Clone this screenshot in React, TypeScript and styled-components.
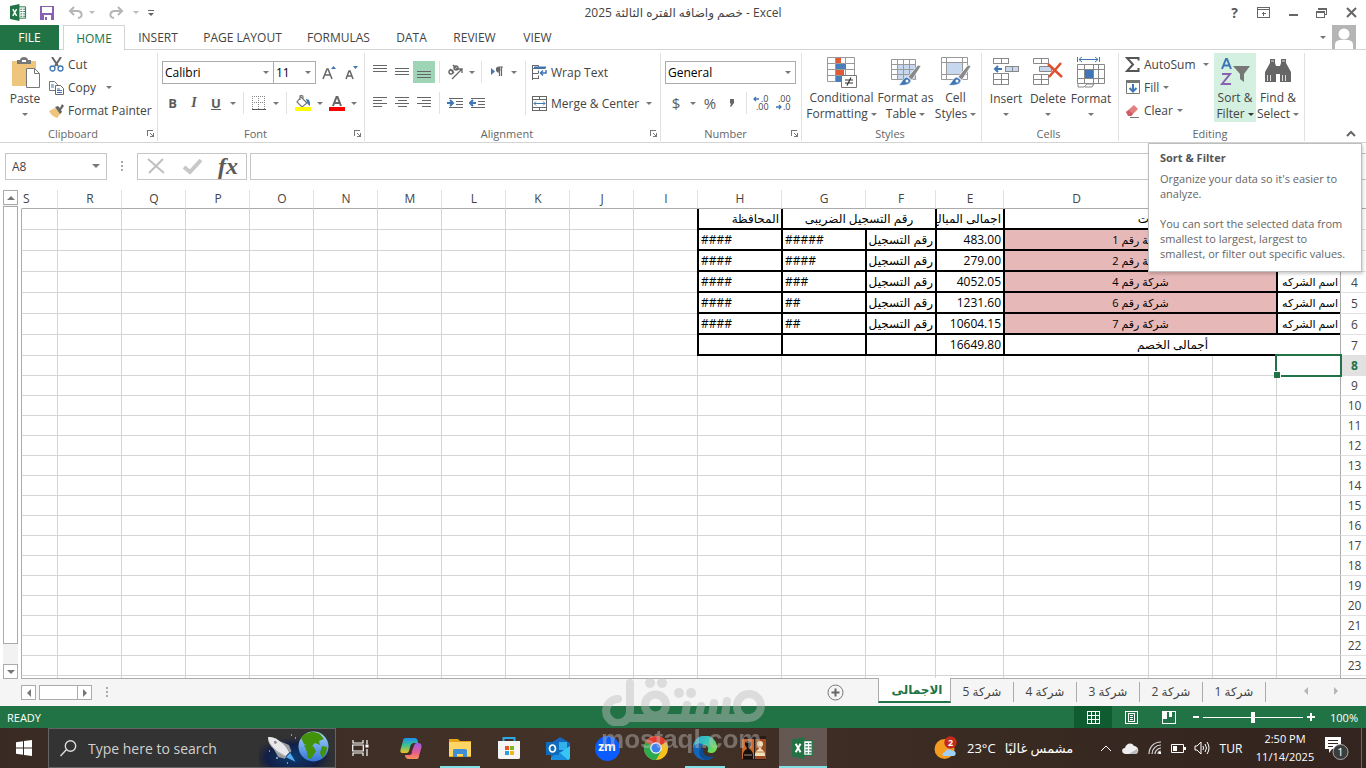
import React from "react";
import styled, { createGlobalStyle, css } from "styled-components";

const GREEN = "#217346";
const LINE = "#d4d4d4";
const EDGE = "#ababab";
const INK = "#444";
const BLUE = "#3f76b5";
const GREY = "#777";

const Global = createGlobalStyle`
  * { box-sizing: border-box; }
  html, body { margin: 0; padding: 0; }
  body { font-family: "Open Sans", "Noto Sans", "DejaVu Sans", sans-serif; font-size: 12px; color: ${INK}; background: #fff; overflow: hidden; }
  button, input, select { font: inherit; color: inherit; margin: 0; padding: 0; border: 0; background: none; border-radius: 0; outline: 0; }
  button { white-space: nowrap; }
  svg { display: block; flex: none; }
`;

const Shell = styled.div`
  display: flex;
  flex-direction: column;
  height: 100vh;
`;

/* ---------- title bar ---------- */
const TitleBar = styled.header`
  display: grid;
  grid-template-columns: 1fr auto 1fr;
  align-items: center;
  flex: none;
  height: 25px;
`;
const QuickAccess = styled.div`
  display: flex;
  align-items: center;
  padding-left: 9px;
  height: 23px;
`;
const IconButton = styled.button<{ $w: number; $h?: number; $on?: boolean }>`
  display: flex;
  align-items: center;
  justify-content: center;
  flex: none;
  width: ${(p) => p.$w}px;
  height: ${(p) => p.$h ?? 22}px;
  background: ${(p) => (p.$on ? "#9fd5b7" : "none")};
`;
const Title = styled.h1`
  margin: 0;
  font-size: 12px;
  font-weight: 400;
  line-height: 25px;
`;
const WindowButtons = styled.div`
  display: flex;
  justify-content: flex-end;
`;

/* ---------- tab strip ---------- */
const TabStrip = styled.nav`
  display: flex;
  flex: none;
  height: 25px;
  border-bottom: 1px solid ${LINE};
`;
const FileTab = styled.button`
  width: 59px;
  height: 25px;
  margin-right: 4px;
  background: ${GREEN};
  color: #fff;
`;
const RibbonTab = styled.button<{ $w: number; $on?: boolean }>`
  width: ${(p) => p.$w}px;
  height: 25px;
  ${(p) =>
    p.$on &&
    css`
      color: ${GREEN};
      background: #fff;
      border: 1px solid ${LINE};
      border-bottom: 0;
    `}
`;
const Account = styled.div`
  display: flex;
  align-items: center;
  gap: 6px;
  margin-left: auto;
  padding-right: 10px;
`;

/* ---------- ribbon ---------- */
const Ribbon = styled.section`
  position: relative;
  display: flex;
  flex: none;
  height: 93px;
  padding-top: 3px;
  border-bottom: 1px solid ${LINE};
`;
const Group = styled.div<{ $w: number }>`
  display: flex;
  flex-direction: column;
  flex: none;
  width: ${(p) => p.$w}px;
  height: 88px;
  border-right: 1px solid #e1e1e1;
`;
const GroupBody = styled.div<{ $pad?: number; $gap?: number }>`
  display: flex;
  flex: 1;
  gap: ${(p) => p.$gap ?? 0}px;
  padding-left: ${(p) => p.$pad ?? 4}px;
`;
const GroupName = styled.div`
  display: flex;
  align-items: center;
  height: 16px;
  padding-right: 3px;
  font-size: 11px;
  color: #666;
  text-align: center;
  span { flex: 1; }
`;
const Stack = styled.div<{ $top?: number; $gap?: number }>`
  display: flex;
  flex-direction: column;
  gap: ${(p) => p.$gap ?? 0}px;
  padding-top: ${(p) => p.$top ?? 0}px;
`;
const Row = styled.div`
  display: flex;
  align-items: center;
  height: 22px;
`;
const Rule = styled.i<{ $h?: number; $m?: number }>`
  flex: none;
  width: 1px;
  height: ${(p) => p.$h ?? 22}px;
  margin: 0 ${(p) => p.$m ?? 4}px;
  background: #e1e1e1;
`;
const LineButton = styled.button<{ $w?: number }>`
  display: flex;
  align-items: center;
  gap: 4px;
  height: 23px;
  width: ${(p) => (p.$w ? p.$w + "px" : "auto")};
`;
const Push = styled.span`
  margin-left: auto;
`;
const BigButton = styled.button<{ $w: number; $on?: boolean }>`
  display: flex;
  flex-direction: column;
  align-items: center;
  flex: none;
  width: ${(p) => p.$w}px;
  height: 69px;
  padding-top: 4px;
  line-height: 16px;
  background: ${(p) => (p.$on ? "#d3f0e0" : "none")};
`;
const BigIcon = styled.span`
  display: flex;
  height: 35px;
`;
const CaretLine = styled.span`
  display: flex;
  align-items: center;
  gap: 3px;
  height: 16px;
`;
const SelectBox = styled.span<{ $w: number }>`
  display: flex;
  align-items: center;
  justify-content: space-between;
  width: ${(p) => p.$w}px;
  height: 23px;
  padding-right: 4px;
  border: 1px solid ${EDGE};
  color: #000;
  & + & { border-left: 0; }
  select { appearance: none; flex: 1; min-width: 0; height: 21px; padding-left: 2px; }
`;
const Glyph = styled.span<{ $size?: number; $style?: "italic" | "underline"; $weight?: number; $serif?: boolean }>`
  font-size: ${(p) => p.$size ?? 13}px;
  font-weight: ${(p) => p.$weight ?? 700};
  font-style: ${(p) => (p.$style === "italic" ? "italic" : "normal")};
  text-decoration: ${(p) => (p.$style === "underline" ? "underline" : "none")};
  font-family: ${(p) => (p.$serif ? '"Liberation Serif", serif' : "inherit")};
  color: #5a5a5a;
`;
const CollapseButton = styled.button`
  align-self: flex-end;
  margin: 0 10px 4px auto;
`;
const Tooltip = styled.div`
  position: absolute;
  z-index: 5;
  top: 93px;
  right: 4px;
  width: 214px;
  height: 129px;
  padding: 6px 0 0 11px;
  background: #fff;
  border: 1px solid #bebebe;
  box-shadow: 1px 2px 3px rgba(0, 0, 0, 0.2);
  font-size: 11px;
  line-height: 15px;
  color: #666;
  white-space: nowrap;
  h2 { margin: 0 0 6px; font-size: 11px; line-height: 15px; color: #555; }
  p { margin: 0 0 15px; }
`;

/* ---------- formula bar ---------- */
const FormulaBar = styled.div`
  display: flex;
  align-items: center;
  flex: none;
  height: 47px;
  padding: 0 0 1px 5px;
`;
const NameBox = styled.label`
  display: flex;
  align-items: center;
  width: 102px;
  height: 27px;
  padding: 0 6px;
  border: 1px solid #c6c6c6;
  input { flex: 1; min-width: 0; }
`;
const DotsBox = styled.span`
  display: flex;
  justify-content: center;
  width: 30px;
`;
const FormulaButtons = styled.div`
  display: flex;
  align-items: center;
  width: 110px;
  height: 27px;
  margin-right: 3px;
  border: 1px solid #c6c6c6;
`;
const FormulaInput = styled.input`
  && { flex: 1; height: 27px; border: 1px solid #c6c6c6; border-right: 0; }
`;

/* ---------- sheet ---------- */
const SheetPane = styled.main`
  display: flex;
  flex: 1;
  min-height: 0;
  overflow: hidden;
`;
const ScrollRail = styled.div`
  display: flex;
  flex-direction: column;
  flex: none;
  width: 15px;
  margin: 0 3px;
  background: #f2f2f2;
`;
const ScrollButton = styled.button<{ $w?: number; $h?: number }>`
  display: flex;
  align-items: center;
  justify-content: center;
  flex: none;
  width: ${(p) => p.$w ?? 15}px;
  height: ${(p) => p.$h ?? 15}px;
  background: #fff;
  border: 1px solid ${EDGE};
`;
const ScrollThumb = styled.div`
  flex: 1;
  margin: 1px 0 20px;
  background: #fff;
  border: 1px solid ${EDGE};
`;
const GridArea = styled.div`
  flex: 1;
  min-width: 0;
  overflow: hidden;
  border-bottom: 1px solid ${EDGE};
`;
const Grid = styled.table`
  width: 100%;
  table-layout: fixed;
  border-collapse: separate;
  border-spacing: 0;
  td, th { padding: 0; white-space: nowrap; overflow: hidden; }
`;
const ColHead = styled.th<{ $corner?: boolean }>`
  height: 19px;
  font-weight: 400;
  line-height: 16px;
  text-align: center;
  border-bottom: 1px solid ${EDGE};
  border-left: 1px solid ${(p) => (p.$corner ? EDGE : "#e1e1e1")};
  && { padding-left: 1px; }
  &:last-child { border-left-color: #fff; text-align: left; }
`;
const RowHead = styled.th<{ $tall?: boolean; $on?: boolean }>`
  height: ${(p) => (p.$tall ? 21 : 20)}px;
  font-weight: ${(p) => (p.$on ? 700 : 400)};
  line-height: 18px;
  text-align: center;
  color: ${(p) => (p.$on ? GREEN : INK)};
  background: ${(p) => (p.$on ? "#e1e1e1" : "#fff")};
  border-left: 1px solid ${EDGE};
  border-bottom: 1px solid #e1e1e1;
  && { padding: 1px 0 0 2px; }
`;
const Cell = styled.td<{ $box?: boolean; $fill?: boolean; $small?: boolean; $align?: "left" | "center" | "right" }>`
  position: relative;
  border-left: 1px solid ${LINE};
  border-bottom: 1px solid ${LINE};
  color: #000;
  font-size: ${(p) => (p.$small ? 11 : 12)}px;
  line-height: 18px;
  text-align: ${(p) => p.$align ?? "right"};
  background: ${(p) => (p.$fill ? "#e6b8b7" : "#fff")};
  ${(p) =>
    p.$box &&
    css`
      && { border-left: 2px solid #000; border-bottom: 2px solid #000; padding: 1px 2px 0; }
    `}
  &:last-child { border-left-color: ${EDGE}; }
`;
const ActiveCell = styled(Cell)`
  && { overflow: visible; }
`;
const Selection = styled.div`
  position: absolute;
  z-index: 2;
  inset: -2px;
  border: 2px solid ${GREEN};
  &::after {
    content: "";
    position: absolute;
    left: -3px;
    bottom: -3px;
    width: 6px;
    height: 6px;
    background: ${GREEN};
    border: solid #fff;
    border-width: 1px 1px 0 0;
  }
`;

/* ---------- sheet tabs ---------- */
const SheetTabs = styled.div`
  display: flex;
  align-items: flex-start;
  flex: none;
  height: 27px;
  background: #f5f5f5;
`;
const HScroll = styled.div`
  display: flex;
  align-items: center;
  padding: 6px 0 0 21px;
`;
const HThumb = styled.div`
  width: 38px;
  height: 15px;
  margin-left: 3px;
  background: #fff;
  border: 1px solid ${EDGE};
  border-right: 0;
`;
const AddSheet = styled.button`
  margin: 5px 34px 0 auto;
`;
const SheetTab = styled.button<{ $on?: boolean }>`
  width: 63px;
  height: 20px;
  margin-top: 3px;
  border-right: 1px solid ${EDGE};
  line-height: 18px;
  ${(p) =>
    p.$on &&
    css`
      && {
        width: 73px;
        height: 25px;
        margin-top: -1px;
        padding-left: 5px;
        background: #fff;
        color: ${GREEN};
        font-weight: 700;
        border: 1px solid ${EDGE};
        border-top: 0;
        border-bottom: 2px solid ${GREEN};
      }
    `}
`;
const SheetNav = styled.div`
  display: flex;
  justify-content: center;
  gap: 22px;
  width: 100px;
  padding: 8px 0 0 10px;
`;

/* ---------- status bar ---------- */
const StatusBar = styled.footer`
  display: flex;
  align-items: center;
  flex: none;
  height: 22px;
  padding: 0 8px 0 7px;
  background: ${GREEN};
  color: #fff;
  font-size: 11px;
`;
const ViewButton = styled.button<{ $on?: boolean }>`
  display: flex;
  align-items: center;
  justify-content: center;
  width: 38px;
  height: 22px;
  background: ${(p) => (p.$on ? "#0e5c2f" : "none")};
`;
const Zoom = styled.input`
  && {
    appearance: none;
    width: 100px;
    height: 12px;
    margin-right: 4px;
    background: linear-gradient(#fff, #fff) center / 100% 1px no-repeat;
  }
  &::-webkit-slider-thumb { appearance: none; width: 4px; height: 11px; background: #fff; }
`;
const Percent = styled.span`
  width: 43px;
  text-align: right;
`;

/* ---------- taskbar ---------- */
const Taskbar = styled.nav`
  display: flex;
  align-items: stretch;
  flex: none;
  height: 40px;
  background: linear-gradient(90deg, #392b23, #433228 45%, #382921 75%, #33241f);
  color: #fff;
`;
const Task = styled.button<{ $open?: boolean; $on?: boolean }>`
  display: flex;
  align-items: center;
  justify-content: center;
  flex: none;
  width: 48px;
  margin-right: 1px;
  background: ${(p) => (p.$on ? "#655852" : "none")};
  box-shadow: ${(p) => (p.$on ? "inset 0 -2px #83dfe6" : "none")};
  ${(p) =>
    p.$open &&
    css`
      background: linear-gradient(#83dfe6, #83dfe6) bottom / 40px 2px no-repeat;
    `}
`;
const Search = styled.label`
  display: flex;
  align-items: center;
  gap: 11px;
  flex: none;
  width: 288px;
  height: 40px;
  padding-left: 11px;
  background: #333;
  border: 1px solid #646464;
  font-size: 14px;
  input { flex: 1; min-width: 0; }
  input::placeholder { color: #d0d0d0; opacity: 1; }
`;
const Tray = styled.div`
  display: flex;
  align-items: center;
  margin-left: auto;
`;
const TrayItem = styled.button<{ $w: number }>`
  display: flex;
  align-items: center;
  justify-content: center;
  width: ${(p) => p.$w}px;
  height: 40px;
`;
const Weather = styled.button`
  display: flex;
  align-items: center;
  gap: 9px;
  width: 160px;
  height: 40px;
  font-size: 13px;
`;
const Clock = styled.button`
  && { width: 76px; font-size: 11px; line-height: 18px; text-align: center; }
`;
const PeekEdge = styled.i`
  width: 1px;
  height: 40px;
  margin: 0 4px 0 10px;
  background: #6f655f;
`;

/* ---------- watermark ---------- */
const Watermark = styled.div`
  position: fixed;
  z-index: 9;
  left: 44%;
  bottom: 15px;
  width: 166px;
  color: rgba(190, 190, 190, 0.45);
  pointer-events: none;
`;
const WatermarkText = styled.div`
  font-family: "Liberation Sans", Arial, sans-serif;
  font-size: 26px;
  font-weight: 700;
  line-height: 27px;
`;

/* ---------- icons ---------- */
type SvgProps = { w: number; h: number; crisp?: boolean; children: React.ReactNode };
const Svg = ({ w, h, crisp, children }: SvgProps) => (
  <svg width={w} height={h} viewBox={`0 0 ${w} ${h}`} fill="none" aria-hidden="true" shapeRendering={crisp ? "crispEdges" : "auto"}>
    {children}
  </svg>
);
const Caret = ({ color = GREY, size = 6 }: { color?: string; size?: number }) => (
  <svg width={size} height={size / 2} viewBox="0 0 6 3" fill={color} aria-hidden="true">
    <path d="M0 0h6L3 3z" />
  </svg>
);
const Arrow = ({ turn, color = GREY }: { turn: "up" | "down" | "left" | "right"; color?: string }) => {
  const d = { up: "M0 6h8L4 2z", down: "M0 2h8L4 6z", left: "M6 0v8L2 4z", right: "M2 0v8l4-4z" }[turn];
  return (
    <Svg w={8} h={8}>
      <path d={d} fill={color} />
    </Svg>
  );
};
const Launcher = () => (
  <Svg w={8} h={8} crisp>
    <path d="M1 7V1h6M4 4l3 3M7 4v3H4" stroke="#777" />
  </Svg>
);
const Dots = () => (
  <Svg w={2} h={11} crisp>
    <path d="M0 0h2v2H0zM0 4h2v2H0zM0 8h2v2H0z" fill="#aaa" />
  </Svg>
);
const ExcelMark = ({ w = 18 }: { w?: number }) => (
  <svg width={w} height={w} viewBox="0 0 18 18" aria-hidden="true">
    <path d="M9 3h7.500v12H9z" fill="#fff" stroke={GREEN} />
    <path d="M11 5.500h2M14 5.500h2M11 8h2M14 8h2M11 10.500h2M14 10.500h2M11 13h2M14 13h2" stroke={GREEN} />
    <path d="M0 2l10-2v18L0 16z" fill={GREEN} />
    <path d="M3 5.500l4 7M7 5.500l-4 7" stroke="#fff" strokeWidth="1.600" />
  </svg>
);
const SaveIcon = () => (
  <Svg w={14} h={14} crisp>
    <path d="M0 0h14v14H0z" fill="#8a5fb4" />
    <path d="M2 1h10v6H2zM4 9h7v5H4z" fill="#fff" />
    <path d="M5 11h2v3H5z" fill="#8a5fb4" />
  </Svg>
);
const UndoIcon = ({ flip }: { flip?: boolean }) => (
  <Svg w={16} h={14}>
    <g transform={flip ? "translate(16 0) scale(-1 1)" : undefined} stroke="#b5b5b5" strokeWidth="2">
      <path d="M2 5h7c6 0 6 7 1 7" />
      <path d="M6 1L2 5l4 4" />
    </g>
  </Svg>
);
const PasteIcon = () => (
  <Svg w={32} h={32}>
    <path d="M3 4h24v25H3z" fill="#efc57c" />
    <path d="M8 3h3c0-4 8-4 8 0h3v4H8z" fill="#777" />
    <path d="M13 3h4v2h-4z" fill="#fff" />
    <path d="M17.500 11.500h8l5 5v14h-13z" fill="#fff" stroke="#777" />
    <path d="M25.500 11.500v5h5" stroke="#777" />
  </Svg>
);
const CutIcon = () => (
  <Svg w={15} h={15}>
    <path d="M3 0l6 9M12 0L6 9" stroke="#666" strokeWidth="2" />
    <circle cx="3.500" cy="11.500" r="2.500" stroke={BLUE} strokeWidth="1.300" />
    <circle cx="11.500" cy="11.500" r="2.500" stroke={BLUE} strokeWidth="1.300" />
  </Svg>
);
const CopyIcon = () => (
  <Svg w={15} h={14}>
    <path d="M.5.5h5l3 3v6h-8z" fill="#fff" stroke="#777" />
    <path d="M2 4h3M2 6h3" stroke={BLUE} />
    <path d="M6.500 4.500h5l3 3v6h-8z" fill="#fff" stroke="#666" />
    <path d="M8 8h3M8 9.500h5M8 11.500h5" stroke={BLUE} />
  </Svg>
);
const BrushIcon = () => (
  <Svg w={15} h={14}>
    <path d="M0 7l6-3 6 5-4 5c-3-1-6-3-8-7z" fill="#efc57c" />
    <path d="M6 3l3-1 2 2 2-4 2 2-3 4 1 2-2 2z" fill="#666" />
  </Svg>
);
const FontSizeIcon = ({ down }: { down?: boolean }) => (
  <Svg w={14} h={15}>
    <path d={down ? "M2 14l3-8h1l3 8M3 11h5" : "M1 14L5 4h1l4 10M2 10h7"} stroke="#666" strokeWidth="1.500" />
    <path d={down ? "M9 1h5l-2.500 3z" : "M9 4h5l-2.500-3z"} fill={BLUE} />
  </Svg>
);
const BordersIcon = () => (
  <Svg w={14} h={14} crisp>
    <path d="M0 .5h14M0 6.500h14M.5 0v13M6.500 0v13M12.500 0v13" stroke="#888" strokeDasharray="1 1" />
    <path d="M0 13.500h14" stroke="#555" />
  </Svg>
);
const FillColorIcon = () => (
  <Svg w={16} h={16}>
    <path d="M6 2l6 6-5 4-5-5zM5 5V1c0-1 3-1 3 1v2" fill="#fff" stroke="#777" strokeWidth="1.200" />
    <path d="M11 4c4 0 4 3 4 7-2-1-3-3-4-7z" fill={BLUE} />
    <path d="M0 12h16v4H0z" fill="#ff0" />
  </Svg>
);
const FontColorIcon = () => (
  <Svg w={16} h={16}>
    <path d="M4 11L7.500 2h1L12 11M5.500 8h5" stroke="#666" strokeWidth="2" />
    <path d="M0 12h16v4H0z" fill="red" />
  </Svg>
);
const BarsIcon = ({ bars, y = 1 }: { bars: Array<[number, number]>; y?: number }) => (
  <Svg w={14} h={14} crisp>
    {bars.map(([x, w], i) => (
      <path key={i} d={`M${x} ${y + i * 3 + 0.5}h${w}`} stroke="#666" />
    ))}
  </Svg>
);
const OrientIcon = () => (
  <Svg w={17} h={17}>
    <path d="M5 15L15 5M15 9V5h-4" stroke="#666" strokeWidth="1.300" />
    <circle cx="4" cy="8" r="2" stroke="#666" strokeWidth="1.400" />
    <path d="M3 5l4 4M6 1l5 5" stroke="#666" strokeWidth="1.400" />
    <circle cx="9" cy="4" r="2" stroke="#666" strokeWidth="1.400" />
  </Svg>
);
const DirectionIcon = () => (
  <Svg w={14} h={12}>
    <path d="M1 2v7l4-3.500z" fill={BLUE} />
    <path d="M9 6a2.500 2.500 0 010-5h4M9.500 1v9M11.500 1v9" stroke="#666" strokeWidth="1.200" />
    <circle cx="8.500" cy="3.500" r="2" fill="#666" />
  </Svg>
);
const IndentIcon = ({ out }: { out?: boolean }) => (
  <Svg w={16} h={12} crisp>
    <path d="M2 1.500h14M9 4.500h7M9 7.500h7M2 10.500h14" stroke="#666" />
    <path d={out ? "M7 6H1M4 3L1 6l3 3" : "M0 6h6M3 3l3 3-3 3"} stroke={BLUE} strokeWidth="2" shapeRendering="auto" />
  </Svg>
);
const WrapIcon = () => (
  <Svg w={15} h={15}>
    <path d="M.5 0v15M1 3.500h12M1 8.500h5M1 13.500h6M.5.500h6v3M6.500 5.500v3M6.500 10.500v3" stroke="#666" />
    <path d="M2 2.500h12" stroke={BLUE} strokeWidth="2" />
    <path d="M14 5v3H9M11 5.500L8.500 8l2.500 2.500" stroke={BLUE} strokeWidth="1.500" />
  </Svg>
);
const MergeIcon = () => (
  <Svg w={15} h={15} crisp>
    <path d="M.5.500h14v14H.5zM.5 3.500h14M.5 11.500h14M7.500 0v3M7.500 12v3" stroke="#666" />
    <path d="M2 7.500h11M4 5.500l-2 2 2 2M11 5.500l2 2-2 2" stroke={BLUE} shapeRendering="auto" />
  </Svg>
);
const DecimalIcon = ({ less }: { less?: boolean }) => (
  <svg width="18" height="20" viewBox="0 -3 18 20" aria-hidden="true">
    <g fill="#444" fontSize="9" fontFamily="Open Sans, sans-serif">
      <text x={less ? 3 : 8} y="6">{less ? ".00" : ".0"}</text>
      <text x={less ? 8 : 3} y="14">{less ? ".0" : ".00"}</text>
    </g>
    <path d={less ? "M1 11h5M4 9l2 2-2 2" : "M6 3H1M3 1L1 3l2 2"} stroke={BLUE} strokeWidth="1.300" fill="none" />
  </svg>
);
const BrushOver = () => (
  <>
    <path d="M28 8l3 1-9 14-4-3z" fill="#888" stroke="#fff" strokeWidth=".7" />
    <path d="M17 20l4 3c0 5-8 6-13 5 4-1 4-7 9-8z" fill={BLUE} stroke="#fff" strokeWidth=".7" />
    <circle cx="17" cy="24" r="1.500" fill="#fff" />
  </>
);
const CondIcon = () => (
  <Svg w={30} h={31}>
    <path d="M.5.500h27v24H.5zM.5 6.500h27M.5 12.500h27M.5 18.500h27M8.500 0v25M18.500 0v25" stroke="#999" fill="#fff" />
    <path d="M9 1h5v5H9zM9 13h8v5H9z" fill="#e05a35" />
    <path d="M9 7h10v5H9zM9 19h5v6H9z" fill="#4a7ebb" />
    <path d="M14.500 18.500h15v12h-15z" fill="#fff" stroke="#777" />
    <path d="M18 23h8M18 26h8M24 20.500l-4 8" stroke="#333" strokeWidth="1.200" />
  </Svg>
);
const TableIcon = () => (
  <Svg w={31} h={30}>
    <path d="M1.500 2.500h24v20h-24z" fill="#fff" />
    <path d="M8 8h17v15H8z" fill="#c5d8ee" />
    <path d="M1.500 2.500h24v20h-24zM1.500 7.500h24M1.500 12.500h24M1.500 17.500h24M7.500 2v20M13.500 2v20M19.500 2v20" stroke="#999" />
    <BrushOver />
  </Svg>
);
const CellStyleIcon = () => (
  <Svg w={31} h={30}>
    <path d="M1.500.500h26v22h-26zM1.500 5.500h26M1.500 17.500h26M6.500 0v22M22.500 0v22" stroke="#999" fill="#fff" />
    <path d="M7 6h15v11H7z" fill="#c5d8ee" />
    <BrushOver />
  </Svg>
);
const InsertIcon = () => (
  <Svg w={28} h={30} crisp>
    <path d="M1.500 1.500h15v5h-15zM9.500 1v5M1.500 16.500h15v11h-15zM9.500 16v11M1.500 22.500h15" stroke="#888" />
    <path d="M13.500 9.500h13v5h-13zM20.500 9v5" stroke="#888" fill="#c5d8ee" />
    <path d="M10 12H3M6 9l-3 3 3 3" stroke={BLUE} strokeWidth="2" shapeRendering="auto" />
  </Svg>
);
const DeleteIcon = () => (
  <Svg w={32} h={30}>
    <path d="M1.500 1.500h15v5h-15zM9.500 1v5M1.500 17.500h15v10h-15zM9.500 17v10M1.500 22.500h15" stroke="#888" />
    <path d="M7.500 9.500h12v5h-12z" fill="#c5d8ee" stroke="#888" />
    <path d="M16 7l14 13M29 6L17 20" stroke="#e0502d" strokeWidth="2.500" />
  </Svg>
);
const FormatIcon = () => (
  <Svg w={30} h={32}>
    <path d="M1.500 0v5M23.500 0v5M3 2.500h19M6 0L3 2.500 6 5M19 0l3 2.500L19 5" stroke={BLUE} />
    <path d="M1.500 7.500h27v19h-27zM1.500 12.500h27M1.500 21.500h27M8.500 7v20M17.500 7v20M22.500 7v20" stroke="#888" fill="#fff" />
    <path d="M9 13h8v8H9z" fill={BLUE} />
    <path d="M2 27v3h6l3-3h7l-2 3H9" stroke="#888" />
  </Svg>
);
const SumIcon = () => (
  <Svg w={15} h={15}>
    <path d="M13.500 3.500V1H2l6 6.500L2 14h11.500v-3" stroke="#555" strokeWidth="2" />
  </Svg>
);
const FillIcon = () => (
  <Svg w={15} h={15}>
    <path d="M1.500.500h13v13h-13z" stroke="#777" fill="#fff" />
    <path d="M1 0h14v3H1z" fill="#777" />
    <path d="M8 4v8M4.500 8L8 11.500 11.500 8" stroke={BLUE} strokeWidth="2" />
  </Svg>
);
const EraserIcon = () => (
  <Svg w={15} h={14}>
    <path d="M1 8l8-7 4 4-7 7H4z" fill="#e08080" />
    <path d="M1 8l3-2 4 4-2 2H3z" fill="#cc5c66" />
    <path d="M5 13.500h9" stroke="#777" />
  </Svg>
);
const SortIcon = () => (
  <Svg w={30} h={31}>
    <path d="M2 12L6 2h1l4 10M3.500 8.500h6" stroke={BLUE} strokeWidth="2" />
    <path d="M2 17h8L2 27h9" stroke="#8a5fb4" strokeWidth="2" />
    <path d="M13 9h17l-6 8v8l-4-3v-5z" fill="#777" />
  </Svg>
);
const FindIcon = () => (
  <Svg w={28} h={30}>
    <path d="M6 2h5v4l1 3h4l1-3V2h5v4l5 9v10H16v-8h-4v8H1V15l5-9z" fill="#666" />
    <path d="M3.500 18v6M6.500 18v6M18.500 18v6M21.500 18v6M7 4h3M18 4h3" stroke="#ddd" />
  </Svg>
);
const Mark = ({ d, w = 14, color = "#666", s = 2, h = 12 }: { d: string; w?: number; h?: number; color?: string; s?: number }) => (
  <Svg w={w} h={h}>
    <path d={d} stroke={color} strokeWidth={s} />
  </Svg>
);

/* ---------- taskbar drawings ---------- */
const WindowsIcon = () => (
  <Svg w={16} h={16}>
    <path d="M0 2.200L7 1.200V7.500H0zM8 1.100L16 0v7.500H8zM0 8.500h7v6.300l-7-1zM8 8.500h8V16l-8-1.100z" fill="#fff" />
  </Svg>
);
const SpaceArt = () => (
  <svg width="76" height="38" viewBox="0 0 76 38" aria-hidden="true">
    <defs>
      <radialGradient id="space" cx=".45" cy=".75" r=".6">
        <stop offset="0" stopColor="#0b3a70" />
        <stop offset=".6" stopColor="#131f45" />
        <stop offset="1" stopColor="#333" stopOpacity="0" />
      </radialGradient>
      <linearGradient id="sea" x1="0" x2="0" y1="0" y2="1">
        <stop offset="0" stopColor="#a5d8ff" />
        <stop offset="1" stopColor="#3473d8" />
      </linearGradient>
    </defs>
    <path d="M0 38V0h76v38z" fill="url(#space)" />
    <circle cx="54.500" cy="17.500" r="15" fill="url(#sea)" />
    <path d="M42 9c4-6 13-8 19-4l4 5-5 2 1 4-5-2-4 4-7-3zM45 16l9 1 3 5-5 8-3-1-1-6zM63 17l5 1-1 6-4 5-2-5z" fill="#43930a" />
    <g transform="translate(9 8) rotate(42)">
      <path d="M12-5l9-3 6 3v2zM12 5l9 3 6-3V3z" fill="#9a9a9f" />
      <path d="M0 0c5-6 17-6 26-3v6C17 6 5 6 0 0z" fill="#e9e9ec" />
      <path d="M2 2c6 3 15 3 24 0v1C17 6 6 6 2 2z" fill="#aaa" />
      <circle cx="9" cy="-1" r="1.500" fill="#8c8c92" />
      <path d="M27-3l10 3-10 3z" fill="#55aef2" />
    </g>
    <path d="M17 29h2M32 6h1M10 22h1M28 34h1M36 9h1" stroke="#fff" />
  </svg>
);
const SearchIcon = () => (
  <Svg w={17} h={17}>
    <circle cx="10.500" cy="6" r="5.200" stroke="#ddd" strokeWidth="1.400" />
    <path d="M6.500 9.500L.5 16" stroke="#ddd" strokeWidth="1.400" />
  </Svg>
);
const TaskViewIcon = () => (
  <Svg w={17} h={16}>
    <path d="M1 0v3h10V0M1 16v-3h10v3M.7 5h10.600v6H.7zM15 0v4M15 9v7" stroke="#fff" strokeWidth="1.200" />
    <path d="M13.500 4.500h3v3h-3z" fill="#fff" />
  </Svg>
);
const CopilotIcon = () => (
  <svg width="22" height="21" viewBox="0 0 22 21" aria-hidden="true">
    <defs>
      <linearGradient id="coA" x1="0" x2="0" y1="0" y2="1">
        <stop offset="0" stopColor="#1b8ff0" />
        <stop offset=".5" stopColor="#3fc28d" />
        <stop offset="1" stopColor="#f0c21c" />
      </linearGradient>
      <linearGradient id="coB" x1="0" x2="0" y1="0" y2="1">
        <stop offset="0" stopColor="#9b5be6" />
        <stop offset=".6" stopColor="#e85c8d" />
        <stop offset="1" stopColor="#f79455" />
      </linearGradient>
    </defs>
    <path d="M17 21H9c-3 0-4-2-4-4h4c2 0 3-1 3-4l2-5c1-3 2-3 4-3 4 0 4 3 3 6l-2 7c0 2-1 3-2 3z" fill="url(#coB)" />
    <path d="M5 0h9c3 0 4 2 4 5h-4c-2 0-3 1-4 4l-1 4c-1 2-2 2-4 2H3c-3 0-3-2-2-5l2-7c0-2 1-3 2-3z" fill="url(#coA)" />
  </svg>
);
const FolderIcon = () => (
  <Svg w={22} h={18}>
    <path d="M0 0h9l2 2h11v16H0z" fill="#e8a217" />
    <path d="M0 3h22v14H0z" fill="#ffd666" />
    <path d="M4 18v-6c0-2 1-2 2-2h10c2 0 2 1 2 2v6h-4v-3H8v3z" fill="#3f8fd6" />
  </Svg>
);
const StoreIcon = () => (
  <Svg w={24} h={24}>
    <path d="M6.500 7V2h11v5" stroke="#2fa8e8" strokeWidth="2" />
    <path d="M1 5h22v16c0 2-1 2-2 2H3c-2 0-2-1-2-2z" fill="#f5f5f5" />
    <path d="M8 10h4v4H8z" fill="#e8512a" />
    <path d="M13 10h4v4h-4z" fill="#7db81e" />
    <path d="M8 15h4v4H8z" fill="#2a9fe0" />
    <path d="M13 15h4v4h-4z" fill="#f5b812" />
  </Svg>
);
const OutlookIcon = () => (
  <Svg w={24} h={23}>
    <path d="M5 6l9-6 10 6v14H5z" fill="#1466c0" />
    <path d="M7 5h14v8H7z" fill="#32b0ea" />
    <path d="M24 9v12c0 1-1 2-2 2H6c-1 0-1-1-1-2l10-6z" fill="#36c5f4" />
    <path d="M5 20l8-5 9 8H6z" fill="#1a8fdf" />
    <path d="M0 5h13v13H0z" fill="#0f6cbd" />
    <ellipse cx="6.500" cy="11.500" rx="3" ry="3.500" stroke="#fff" strokeWidth="1.700" />
  </Svg>
);
const ZoomBadge = styled.span`
  display: flex;
  align-items: center;
  justify-content: center;
  width: 25px;
  height: 25px;
  border-radius: 50%;
  background: #0b5cff;
  font-size: 12px;
  font-weight: 700;
  line-height: 20px;
  padding-bottom: 3px;
`;
const ChromeIcon = () => (
  <Svg w={24} h={24}>
    <circle cx="12" cy="12" r="12" fill="#f9c21b" />
    <path d="M12 12L1.600 6A12 12 0 0122.400 6z" fill="#e33b2e" />
    <path d="M1.600 6A12 12 0 0012 24l5.200-9L12 12z" fill="#2da94f" />
    <path d="M12 6.500h10.600l-.6-1.200H12z" fill="#e33b2e" />
    <circle cx="12" cy="12" r="5.800" fill="#fff" />
    <circle cx="12" cy="12" r="4.600" fill="#3f80ee" />
  </Svg>
);
const EdgeIcon = () => (
  <svg width="24" height="24" viewBox="0 0 24 24" aria-hidden="true">
    <defs>
      <linearGradient id="edgeTop" x1="0" x2="1" y1="0" y2=".5">
        <stop offset="0" stopColor="#2f9fe0" />
        <stop offset=".6" stopColor="#36c7b5" />
        <stop offset="1" stopColor="#6fdc52" />
      </linearGradient>
    </defs>
    <path d="M0 12a12 12 0 0124-1c0 4-3 6-6 6-3 0-4-1-3-3 1-3-2-6-6-5-5 1-8 4-9 3z" fill="url(#edgeTop)" />
    <path d="M0 12c1-4 7-6 11-3-3 1-4 5-2 8 2 4 7 6 12 3a12 12 0 01-21-8z" fill="#1566b8" />
    <path d="M8 12c-4 4-1 10 4 12a12 12 0 009-4c-6 2-12-1-11-7z" fill="#0d4c94" />
  </svg>
);
const ChessIcon = () => (
  <Svg w={24} h={24}>
    <path d="M0 0h24v24H0z" fill="#2a1b16" />
    <path d="M0 3h12v20H0z" fill="#c9692f" />
    <path d="M13 3h11v20H13z" fill="#9c4a22" />
    <circle cx="6" cy="8" r="3" fill="#150f0d" />
    <path d="M4 10h4l-1 3c3 1 4 4 4 6v4H1v-4c0-2 1-5 4-6z" fill="#150f0d" />
    <circle cx="18" cy="8" r="3" fill="#f3dfb5" />
    <path d="M16 10h4l-1 3c3 1 4 4 4 6v1H13v-1c0-2 1-5 4-6z" fill="#f3dfb5" />
    <path d="M4 6h4M2 19h8" stroke="#a78a72" />
    <path d="M14 16h8M16 11h4" stroke="#b87f4a" />
  </Svg>
);
const WeatherIcon = () => (
  <svg width="24" height="24" viewBox="0 0 24 24" aria-hidden="true">
    <circle cx="10.500" cy="13" r="10" fill="#f39c1f" />
    <path d="M10 20c-3-1-1-4 1-4 1-4 6-3 7-1 4-1 5 4 2 5z" fill="#9fd0f7" />
    <circle cx="16.500" cy="6.500" r="6.200" fill="#c42b1c" />
    <text x="16.500" y="10" fontSize="9" fontWeight="700" textAnchor="middle" fill="#fff">2</text>
  </svg>
);
const CloudIcon = () => (
  <Svg w={17} h={11}>
    <path d="M4 11C-1 11-1 5 3 5c1-5 7-6 9-2 5 0 6 8 1 8z" fill="#eee" />
    <path d="M7 11l8-5c2 2 1 5-2 5z" fill="#bbb" />
  </Svg>
);
const WifiIcon = () => (
  <Svg w={14} h={14}>
    <path d="M1 13C1 6 6 1 13 1M4 13c0-5 4-9 9-9M7 13c0-3 3-6 6-6M10 13c0-2 1-3 3-3" stroke="#ddd" strokeWidth="1.200" />
    <path d="M11 11h2v2h-2z" fill="#fff" />
  </Svg>
);
const BatteryIcon = () => (
  <Svg w={15} h={9}>
    <path d="M.5.500h12v8H.5z" stroke="#fff" />
    <path d="M2 2h4v5H2zM13 3h2v3h-2z" fill="#fff" />
  </Svg>
);
const SpeakerIcon = () => (
  <Svg w={17} h={14}>
    <path d="M1 5h2l4-4v12L3 9H1zM9 5q1 2 0 4M11 3q3 4 0 8M13 1q4 6 0 12" stroke="#fff" />
  </Svg>
);
const NotesIcon = () => (
  <svg width="24" height="24" viewBox="0 0 24 24" aria-hidden="true">
    <path d="M0 1h16v12H7l-3 4v-4H0z" fill="#fff" />
    <path d="M3 4.500h10M3 7.500h10M3 10.500h5" stroke="#33241f" />
    <circle cx="15.500" cy="16" r="7.500" fill="#3c3c3c" stroke="#aaa" />
    <text x="15.500" y="20" fontSize="11" textAnchor="middle" fill="#fff">1</text>
  </svg>
);
const WatermarkMark = () => (
  <svg width="166" height="48" viewBox="0 0 166 48" aria-hidden="true">
    <g opacity=".45" stroke="#bebebe" fill="none" strokeWidth="8">
      <path d="M17 21a12 12 0 1011 17q1-2 1-6V5M28 40h120a12 12 0 10-12-11q0 6 7 11" strokeLinecap="round" />
      <circle cx="54.500" cy="27" r="10.500" />
      <path d="M86 27l-2 10M100 28l-2 9M113 25l-2 12M126 23l-2 14" strokeLinecap="round" />
      <g fill="#bebebe" stroke="none">
        <circle cx="49" cy="5" r="5" />
        <circle cx="61" cy="5" r="5" />
        <circle cx="78" cy="15" r="5" />
        <circle cx="90" cy="15" r="5" />
      </g>
    </g>
  </svg>
);

/* ---------- data ---------- */
const TABS: Array<[string, number]> = [["HOME", 62], ["INSERT", 66], ["PAGE LAYOUT", 103], ["FORMULAS", 89], ["DATA", 57], ["REVIEW", 69], ["VIEW", 57]];
const COLUMNS: Array<[string, number | undefined]> = [
  ["A", 64], ["B", 64], ["C", 64], ["D", 145], ["E", 68], ["F", 70], ["G", 84], ["H", 84], ["I", 64], ["J", 64],
  ["K", 64], ["L", 64], ["M", 64], ["N", 64], ["O", 64], ["P", 64], ["Q", 64], ["R", 64], ["S", undefined],
];
const COMPANIES = [
  { no: 1, total: "483.00", tax: "#####" },
  { no: 2, total: "279.00", tax: "####" },
  { no: 4, total: "4052.05", tax: "###" },
  { no: 6, total: "1231.60", tax: "##" },
  { no: 7, total: "10604.15", tax: "##" },
];
const blanks = (n: number) => Array.from({ length: n }, (_, i) => <Cell key={i} />);
const FULL: Array<[number, number]> = [[0, 14], [0, 14], [0, 14]];

const ClipboardGroup = () => (
  <Group $w={158}>
    <GroupBody $pad={4}>
      <BigButton $w={42}>
        <BigIcon><PasteIcon /></BigIcon>
        <span>Paste</span>
        <CaretLine><Caret /></CaretLine>
      </BigButton>
      <Rule $h={0} $m={1} />
      <Stack>
        <LineButton $w={104}><CutIcon />Cut</LineButton>
        <LineButton $w={63}><CopyIcon />Copy<Push><Caret /></Push></LineButton>
        <LineButton><BrushIcon />Format Painter</LineButton>
      </Stack>
    </GroupBody>
    <GroupName><span>Clipboard</span><Launcher /></GroupName>
  </Group>
);

const FontGroup = () => (
  <Group $w={207}>
    <GroupBody>
      <Stack $top={8} $gap={9}>
        <Row>
          <SelectBox $w={112}><select aria-label="Font"><option>Calibri</option></select><Caret /></SelectBox>
          <SelectBox $w={42}><select aria-label="Font size"><option>11</option></select><Caret /></SelectBox>
          <IconButton $w={26} aria-label="Increase font size"><FontSizeIcon /></IconButton>
          <IconButton $w={18} aria-label="Decrease font size"><FontSizeIcon down /></IconButton>
        </Row>
        <Row>
          <IconButton $w={21}><Glyph>B</Glyph></IconButton>
          <IconButton $w={22}><Glyph $style="italic" $serif $size={14}>I</Glyph></IconButton>
          <IconButton $w={22}><Glyph $style="underline">U</Glyph></IconButton>
          <IconButton $w={12} aria-label="Underline styles"><Caret /></IconButton>
          <Rule $m={4} />
          <IconButton $w={21} aria-label="Borders"><BordersIcon /></IconButton>
          <IconButton $w={13} aria-label="Border styles"><Caret /></IconButton>
          <Rule $m={4} />
          <IconButton $w={24} aria-label="Fill color"><FillColorIcon /></IconButton>
          <IconButton $w={10} aria-label="Fill colors"><Caret /></IconButton>
          <IconButton $w={24} aria-label="Font color"><FontColorIcon /></IconButton>
          <IconButton $w={10} aria-label="Font colors"><Caret /></IconButton>
        </Row>
      </Stack>
    </GroupBody>
    <GroupName><span>Font</span><Launcher /></GroupName>
  </Group>
);

const AlignmentGroup = () => (
  <Group $w={296}>
    <GroupBody>
      <Stack $top={8} $gap={9}>
        <Row>
          <IconButton $w={22} aria-label="Top align"><BarsIcon bars={FULL} y={0} /></IconButton>
          <IconButton $w={22} aria-label="Middle align"><BarsIcon bars={FULL} y={3} /></IconButton>
          <IconButton $w={22} $on aria-label="Bottom align"><BarsIcon bars={FULL} y={6} /></IconButton>
          <Rule />
          <IconButton $w={22} aria-label="Orientation"><OrientIcon /></IconButton>
          <IconButton $w={11} aria-label="Orientation options"><Caret /></IconButton>
          <Rule />
          <IconButton $w={22} aria-label="Text direction"><DirectionIcon /></IconButton>
          <IconButton $w={11} aria-label="Text direction options"><Caret /></IconButton>
        </Row>
        <Row>
          <IconButton $w={22} aria-label="Align left"><BarsIcon bars={[[0, 14], [0, 9], [0, 14], [0, 9]]} /></IconButton>
          <IconButton $w={22} aria-label="Center"><BarsIcon bars={[[0, 14], [3, 9], [0, 14], [3, 9]]} /></IconButton>
          <IconButton $w={22} aria-label="Align right"><BarsIcon bars={[[0, 14], [5, 9], [0, 14], [5, 9]]} /></IconButton>
          <Rule />
          <IconButton $w={22} aria-label="Increase indent"><IndentIcon /></IconButton>
          <IconButton $w={22} aria-label="Decrease indent"><IndentIcon out /></IconButton>
        </Row>
      </Stack>
      <Stack $top={8}><Rule $h={54} $m={6} /></Stack>
      <Stack $top={8} $gap={8}>
        <LineButton><WrapIcon />Wrap Text</LineButton>
        <LineButton $w={120}><MergeIcon />Merge &amp; Center<Push><Caret /></Push></LineButton>
      </Stack>
    </GroupBody>
    <GroupName><span>Alignment</span><Launcher /></GroupName>
  </Group>
);

const NumberGroup = () => (
  <Group $w={141}>
    <GroupBody $pad={4}>
      <Stack $top={8} $gap={9}>
        <Row><SelectBox $w={131}><select aria-label="Number format"><option>General</option></select><Caret /></SelectBox></Row>
        <Row>
          <IconButton $w={22}><Glyph $size={15} $weight={400}>$</Glyph></IconButton>
          <IconButton $w={11} aria-label="Currency"><Caret /></IconButton>
          <IconButton $w={24}><Glyph $size={15} $weight={400}>%</Glyph></IconButton>
          <IconButton $w={20} aria-label="Comma style">
            <Svg w={6} h={10}><path d="M1 1h4v4L2 9 1 8l1-2-1-1z" fill="#666" /></Svg>
          </IconButton>
          <Rule />
          <IconButton $w={22} aria-label="Increase decimal"><DecimalIcon /></IconButton>
          <IconButton $w={22} aria-label="Decrease decimal"><DecimalIcon less /></IconButton>
        </Row>
      </Stack>
    </GroupBody>
    <GroupName><span>Number</span><Launcher /></GroupName>
  </Group>
);

const StylesGroup = () => (
  <Group $w={180}>
    <GroupBody $pad={4}>
      <BigButton $w={71}><BigIcon><CondIcon /></BigIcon><span>Conditional</span><CaretLine>Formatting<Caret /></CaretLine></BigButton>
      <BigButton $w={57}><BigIcon><TableIcon /></BigIcon><span>Format as</span><CaretLine>Table<Caret /></CaretLine></BigButton>
      <BigButton $w={43}><BigIcon><CellStyleIcon /></BigIcon><span>Cell</span><CaretLine>Styles<Caret /></CaretLine></BigButton>
    </GroupBody>
    <GroupName><span>Styles</span></GroupName>
  </Group>
);

const CellsGroup = () => (
  <Group $w={137}>
    <GroupBody $pad={3}>
      <BigButton $w={42}><BigIcon><InsertIcon /></BigIcon><span>Insert</span><CaretLine><Caret /></CaretLine></BigButton>
      <BigButton $w={42}><BigIcon><DeleteIcon /></BigIcon><span>Delete</span><CaretLine><Caret /></CaretLine></BigButton>
      <BigButton $w={44}><BigIcon><FormatIcon /></BigIcon><span>Format</span><CaretLine><Caret /></CaretLine></BigButton>
    </GroupBody>
    <GroupName><span>Cells</span></GroupName>
  </Group>
);

const EditingGroup = () => (
  <Group $w={186}>
    <GroupBody $pad={6}>
      <Stack>
        <LineButton $w={84}><SumIcon />AutoSum<Push><Caret /></Push></LineButton>
        <LineButton><FillIcon />Fill<Caret /></LineButton>
        <LineButton><EraserIcon />Clear<Caret /></LineButton>
      </Stack>
      <Rule $h={0} $m={2} />
      <BigButton $w={42} $on><BigIcon><SortIcon /></BigIcon><span>Sort &amp;</span><CaretLine>Filter<Caret color="#333" /></CaretLine></BigButton>
      <BigButton $w={44}><BigIcon><FindIcon /></BigIcon><span>Find &amp;</span><CaretLine>Select<Caret /></CaretLine></BigButton>
    </GroupBody>
    <GroupName><span>Editing</span></GroupName>
  </Group>
);

const Sheet = () => (
  <Grid dir="rtl">
    <colgroup>
      <col style={{ width: 26 }} />
      {COLUMNS.map(([name, width]) => <col key={name} style={{ width }} />)}
    </colgroup>
    <thead>
      <tr>
        <ColHead $corner aria-label="Select all" />
        {COLUMNS.map(([name]) => <ColHead key={name}>{name}</ColHead>)}
      </tr>
    </thead>
    <tbody>
      <tr>
        <RowHead $tall>1</RowHead>
        <Cell $box $align="center" colSpan={4}>اسم الشركات</Cell>
        <Cell $box>اجمالى المبالغ</Cell>
        <Cell $box $align="center" colSpan={2}>رقم التسجيل الضريبى</Cell>
        <Cell $box>المحافظة</Cell>
        {blanks(11)}
      </tr>
      {COMPANIES.map((c, i) => (
        <tr key={c.no}>
          <RowHead $tall>{i + 2}</RowHead>
          <Cell $box $small>اسم الشركه</Cell>
          <Cell $box $small $fill $align="center" colSpan={3}>شركة رقم {c.no}</Cell>
          <Cell $box>{c.total}</Cell>
          <Cell $box>رقم التسجيل</Cell>
          <Cell $box $align="left">{c.tax}</Cell>
          <Cell $box $align="left">####</Cell>
          {blanks(11)}
        </tr>
      ))}
      <tr>
        <RowHead $tall>7</RowHead>
        <Cell $box $align="center" colSpan={4}>أجمالى الخصم</Cell>
        <Cell $box>16649.80</Cell>
        <Cell $box /><Cell $box /><Cell $box />
        {blanks(11)}
      </tr>
      <tr>
        <RowHead $on>8</RowHead>
        <ActiveCell><Selection /></ActiveCell>
        {blanks(18)}
      </tr>
      {Array.from({ length: 16 }, (_, i) => (
        <tr key={i}>
          <RowHead>{i + 9}</RowHead>
          {blanks(19)}
        </tr>
      ))}
    </tbody>
  </Grid>
);

export default function App() {
  return (
    <Shell>
      <Global />
      <TitleBar>
        <QuickAccess>
          <IconButton $w={18} aria-label="Excel"><ExcelMark w={17} /></IconButton>
          <IconButton $w={40} aria-label="Save"><SaveIcon /></IconButton>
          <IconButton $w={18} aria-label="Undo"><UndoIcon /></IconButton>
          <IconButton $w={14} aria-label="Undo list"><Caret color="#bbb" /></IconButton>
          <IconButton $w={34} aria-label="Redo"><UndoIcon flip /></IconButton>
          <IconButton $w={6} aria-label="Redo list"><Caret color="#bbb" /></IconButton>
          <IconButton $w={24} aria-label="Customize toolbar">
            <Svg w={6} h={6}><path d="M0 .5h6" stroke="#666" /><path d="M0 3h6L3 6z" fill="#666" /></Svg>
          </IconButton>
        </QuickAccess>
        <Title><bdi dir="rtl">خصم واضافه الفتره الثالثة 2025</bdi> - Excel</Title>
        <WindowButtons>
          <IconButton $w={29}><Glyph $size={14}>?</Glyph></IconButton>
          <IconButton $w={29} aria-label="Ribbon display options">
            <Svg w={13} h={11} crisp><path d="M.5.500h12v10H.5zM.5 2.500h12M6.500 9V5M4.500 6.500h4" stroke="#666" /></Svg>
          </IconButton>
          <IconButton $w={29} aria-label="Minimize"><Mark d="M1 8h9" w={10} /></IconButton>
          <IconButton $w={29} aria-label="Restore">
            <Svg w={11} h={10} crisp><path d="M2.500 2V.5h8v6H9M.5 3.500h8v6h-8zM.5 4.500h8M2 1.500h8" stroke="#666" /></Svg>
          </IconButton>
          <IconButton $w={30} aria-label="Close"><Mark d="M1 1l9 9M10 1l-9 9" w={11} h={11} /></IconButton>
        </WindowButtons>
      </TitleBar>

      <TabStrip>
        <FileTab>FILE</FileTab>
        {TABS.map(([name, w], i) => <RibbonTab key={name} $w={w} $on={i === 0}>{name}</RibbonTab>)}
        <Account>
          <Caret size={6} />
          <Svg w={24} h={24}>
            <path d="M0 0h24v24H0z" fill="#b5b5b5" />
            <circle cx="12" cy="9" r="5.500" fill="#fff" />
            <path d="M3 24v-4c0-4 3-5 6-5h6c3 0 6 1 6 5v4z" fill="#fff" />
          </Svg>
        </Account>
      </TabStrip>

      <Ribbon>
        <ClipboardGroup />
        <FontGroup />
        <AlignmentGroup />
        <NumberGroup />
        <StylesGroup />
        <CellsGroup />
        <EditingGroup />
        <CollapseButton aria-label="Collapse the ribbon"><Mark d="M1 6l4-4 4 4" w={10} h={8} /></CollapseButton>
        <Tooltip role="tooltip">
          <h2>Sort &amp; Filter</h2>
          <p>Organize your data so it's easier to<br />analyze.</p>
          <p>You can sort the selected data from<br />smallest to largest, largest to<br />smallest, or filter out specific values.</p>
        </Tooltip>
      </Ribbon>

      <FormulaBar>
        <NameBox><input aria-label="Name box" defaultValue="A8" /><Caret size={8} /></NameBox>
        <DotsBox><Dots /></DotsBox>
        <FormulaButtons>
          <IconButton $w={36} aria-label="Cancel"><Mark d="M1 1l16 14M16 1L2 15" w={18} h={16} s={2} color="#c0c0c0" /></IconButton>
          <IconButton $w={37} aria-label="Enter"><Mark d="M1 9l6 5L18 2" w={20} h={17} s={4} color="#c8c8c8" /></IconButton>
          <IconButton $w={34}><Glyph $serif $style="italic" $size={24}>fx</Glyph></IconButton>
        </FormulaButtons>
        <FormulaInput aria-label="Formula" />
      </FormulaBar>

      <SheetPane>
        <ScrollRail>
          <ScrollButton aria-label="Scroll up"><Arrow turn="up" /></ScrollButton>
          <ScrollThumb />
          <ScrollButton aria-label="Scroll down"><Arrow turn="down" /></ScrollButton>
        </ScrollRail>
        <GridArea><Sheet /></GridArea>
      </SheetPane>

      <SheetTabs>
        <HScroll>
          <ScrollButton aria-label="Scroll left"><Arrow turn="left" /></ScrollButton>
          <HThumb />
          <ScrollButton aria-label="Scroll right"><Arrow turn="right" /></ScrollButton>
          <DotsBox><Dots /></DotsBox>
        </HScroll>
        <AddSheet aria-label="New sheet">
          <Svg w={17} h={17}>
            <circle cx="8.500" cy="8.500" r="7.500" stroke="#777" />
            <path d="M4.500 8.500h8M8.500 4.500v8" stroke="#666" strokeWidth="2" />
          </Svg>
        </AddSheet>
        <SheetTab $on dir="rtl">الاجمالى</SheetTab>
        {[5, 4, 3, 2, 1].map((n) => <SheetTab key={n} dir="rtl">شركة {n}</SheetTab>)}
        <SheetNav><Arrow turn="left" color="#b5b5b5" /><Arrow turn="right" color="#b5b5b5" /></SheetNav>
      </SheetTabs>

      <StatusBar>
        <span>READY</span>
        <Push />
        <ViewButton $on aria-label="Normal view">
          <Svg w={13} h={13} crisp><path d="M.5.500h12v12H.5zM.5 4.500h12M.5 8.500h12M4.500 0v12M8.500 0v12" stroke="#fff" /></Svg>
        </ViewButton>
        <ViewButton aria-label="Page layout view">
          <Svg w={13} h={13} crisp><path d="M.5.500h12v12H.5zM3.500 2.500h6v8h-6zM5 4.500h3M5 6.500h3M5 8.500h3" stroke="#fff" /></Svg>
        </ViewButton>
        <ViewButton aria-label="Page break view">
          <Svg w={14} h={13} crisp><path d="M.5.500h13v12H.5z" stroke="#fff" /><path d="M0 0h5v8H0zM7 0h3v6H7z" fill="#fff" /></Svg>
        </ViewButton>
        <IconButton $w={15} aria-label="Zoom out"><Mark d="M0 3h6" w={6} h={6} color="#fff" /></IconButton>
        <Zoom type="range" min={0} max={100} defaultValue={50} aria-label="Zoom" />
        <IconButton $w={8} aria-label="Zoom in"><Mark d="M0 4h8M4 0v8" w={8} h={8} color="#fff" /></IconButton>
        <Percent>100%</Percent>
      </StatusBar>

      <Taskbar>
        <TrayItem $w={48} aria-label="Start"><WindowsIcon /></TrayItem>
        <Search><SearchIcon /><input aria-label="Search" placeholder="Type here to search" /><SpaceArt /></Search>
        <Task aria-label="Task view"><TaskViewIcon /></Task>
        <Rule $h={0} $m={0} />
        <Rule $h={0} $m={0} />
        <Task aria-label="Copilot"><CopilotIcon /></Task>
        <Task $open aria-label="File Explorer"><FolderIcon /></Task>
        <Task aria-label="Store"><StoreIcon /></Task>
        <Task aria-label="Outlook"><OutlookIcon /></Task>
        <Task><ZoomBadge>zm</ZoomBadge></Task>
        <Task aria-label="Chrome"><ChromeIcon /></Task>
        <Task $open aria-label="Edge"><EdgeIcon /></Task>
        <Task aria-label="Chess"><ChessIcon /></Task>
        <Task $on aria-label="Excel"><ExcelMark w={22} /></Task>
        <Tray>
          <Weather><WeatherIcon /><span>23°C</span><span dir="rtl">مشمس غالبًا</span></Weather>
          <TrayItem $w={24} aria-label="Hidden icons"><Mark d="M1 7l5-5 5 5" w={12} h={8} s={1} color="#fff" /></TrayItem>
          <TrayItem $w={25} aria-label="OneDrive"><CloudIcon /></TrayItem>
          <TrayItem $w={24} aria-label="Network"><WifiIcon /></TrayItem>
          <TrayItem $w={23} aria-label="Battery"><BatteryIcon /></TrayItem>
          <TrayItem $w={25} aria-label="Volume"><SpeakerIcon /></TrayItem>
          <TrayItem $w={32}>TUR</TrayItem>
          <Clock>2:50 PM<br />11/14/2025</Clock>
          <TrayItem $w={28} aria-label="Notifications"><NotesIcon /></TrayItem>
          <PeekEdge />
        </Tray>
      </Taskbar>

      <Watermark>
        <WatermarkMark />
        <WatermarkText>mostaql.com</WatermarkText>
      </Watermark>
    </Shell>
  );
}
